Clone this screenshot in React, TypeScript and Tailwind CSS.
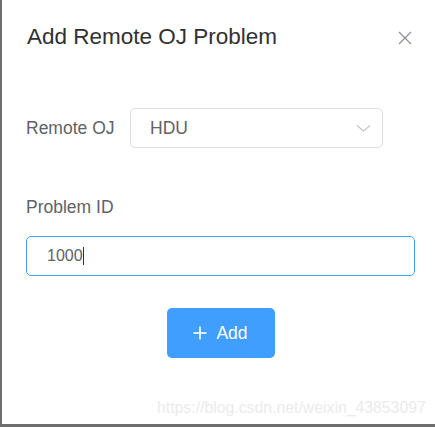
import React from 'react';

export default function App() {
  return (
    <div
      className="relative w-[435px] h-[427px] bg-white border-l-2 border-b-[3px] border-[#6e6e6e] overflow-hidden"
      style={{ fontFamily: '"Liberation Sans", Arial, sans-serif' }}
    >
      {/* header */}
      <div className="pl-[25px] pt-[22px] pr-6">
        <h2 className="text-[22.5px] leading-[30px] text-[#303133]">Add Remote OJ Problem</h2>
      </div>
      <button className="absolute left-[395px] top-[30px] w-[16px] h-[16px] flex items-center justify-center">
        <svg width="14" height="14" viewBox="0 0 14 14" fill="none" stroke="#909399" strokeWidth="1.3">
          <line x1="1" y1="1" x2="13" y2="13" />
          <line x1="13" y1="1" x2="1" y2="13" />
        </svg>
      </button>

      {/* body */}
      <div className="pl-[24px] pr-[19px]">
        <div className="mt-[56px] flex items-center">
          <label className="w-[104px] text-[17.5px] text-[#606266] leading-[40px]">Remote OJ</label>
          <div className="w-[253px] h-[40px] border border-[#dcdfe6] rounded-[5px] flex items-center justify-between pl-[19px] pr-[11px]">
            <span className="text-[17.5px] text-[#606266]">HDU</span>
            <svg width="15" height="10" viewBox="0 0 15 10" fill="none" stroke="#c0c4cc" strokeWidth="1.2">
              <polyline points="1,2.5 7.5,8 14,2.5" />
            </svg>
          </div>
        </div>

        <div className="mt-[39px] text-[17.5px] leading-[40px] text-[#606266]">Problem ID</div>

        <div className="mt-[9px] mr-px h-[40px] border border-[#409eff] rounded-[5px] flex items-center pl-[20px]">
          <span className="text-[16px] text-[#606266]">1000</span>
          <span className="w-[1.5px] h-[18px] bg-[#303133]" />
        </div>

        <div className="mt-[32px] mr-px flex justify-center">
          <button className="w-[108px] h-[50px] rounded-[5px] bg-[#409eff] text-white flex items-center justify-center gap-[9px]">
            <svg width="14" height="14" viewBox="0 0 14 14" fill="none" stroke="white" strokeWidth="1.6">
              <line x1="7" y1="0.5" x2="7" y2="13.5" />
              <line x1="0.5" y1="7" x2="13.5" y2="7" />
            </svg>
            <span className="text-[17.5px] font-medium">Add</span>
          </button>
        </div>
      </div>

      {/* watermark */}
      <div className="absolute left-[155px] top-[398px] text-[15.8px] leading-[20px] text-[#ebebeb] whitespace-nowrap">
        https://blog.csdn.net/weixin_43853097
      </div>
    </div>
  );
}
